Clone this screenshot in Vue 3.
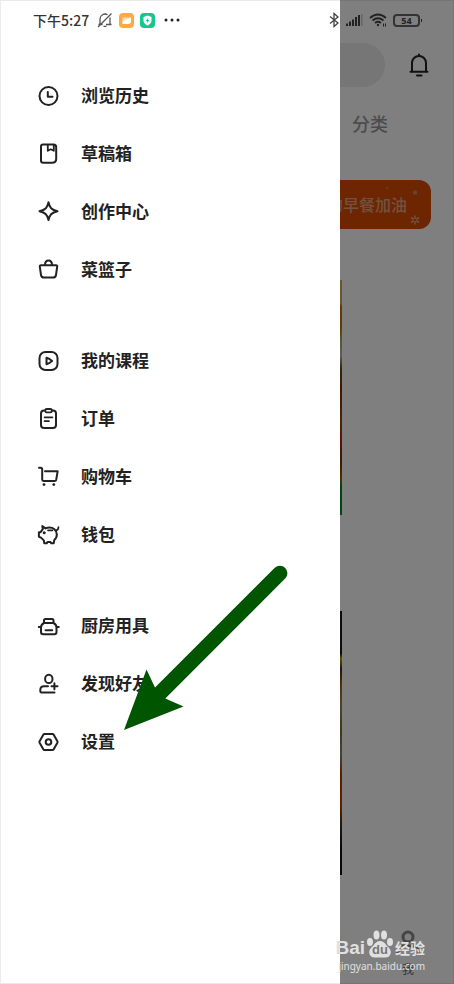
<script setup>
const groups = [
  [
    { id: 'history', label: '浏览历史' },
    { id: 'drafts', label: '草稿箱' },
    { id: 'create', label: '创作中心' },
    { id: 'basket', label: '菜篮子' },
  ],
  [
    { id: 'course', label: '我的课程' },
    { id: 'order', label: '订单' },
    { id: 'cart', label: '购物车' },
    { id: 'wallet', label: '钱包' },
  ],
  [
    { id: 'kitchen', label: '厨房用具' },
    { id: 'friends', label: '发现好友' },
    { id: 'settings', label: '设置' },
  ],
]

const icons = {
  history: '<circle cx="12.5" cy="12" r="9"/><path d="M11.8 8v4.700h4.700"/>',
  drafts:
    '<path d="M7.500 2.500h10q2.700 0 2.700 2.700v11.500q0 4-4 4H7.200q-2.200 0-2.200-2.200V4.500q0-2 2-2z"/><path d="M11.800 3v5.800l3-1.500 3 1.500V3" stroke-width="1.800"/>',
  create:
    '<path d="M12.500 2.300c1 5.200 3 7.500 9 8.900-6 1.400-8 3.700-9 8.900-1-5.200-3-7.500-9-8.900 6-1.400 8-3.700 9-8.900z"/>',
  basket:
    '<path d="M5 7.300h15q1.400 0 1.200 1.400l-1.200 8.300q-.4 2.500-2.900 2.500H7.900q-2.500 0-2.900-2.500L3.800 8.700q-.2-1.400 1.200-1.400z"/><path d="M9 7c0-6 7-6 7 0"/>',
  course: '<rect x="3.500" y="3" width="18" height="18" rx="6"/><path d="M10.500 8.800v6.400q2.800-.8 5.600-3.200-2.800-2.400-5.600-3.200z"/>',
  order:
    '<rect x="5" y="3.500" width="15" height="17.500" rx="3"/><rect x="9.300" y="2" width="6.500" height="3.400" rx="1.500" fill="#fff" stroke-width="1.800"/><path d="M8.600 10.300h7.800M8.600 14.200h4.300" stroke-width="1.800"/>',
  cart:
    '<path d="M3 2.700h1.700q1.500 0 1.500 1.500v10.400q0 1.400 1.400 1.400h11q1.300 0 1.600-1.300l1.500-8.500H9"/><g fill="#222" stroke="none"><circle cx="8" cy="19.600" r="1.400"/><circle cx="17.800" cy="19.600" r="1.400"/></g>',
  wallet:
    '<path d="M6.300 3.100l.5 3.100L4.600 9.200H2.900v4.600l2.100.8 2.800 2.800.5 2.800h2.500l.7-1.300h3l.7 1.300h2.500l.6-3.200c1.800-1.600 2.700-3.200 2.500-5.600 0-1.900-.9-3.800-2.400-5.100-1.500-1.300-3.300-1.700-5-1.700-1.500 0-2.800.4-3.900.8z" stroke-width="2"/><path d="M20 7.300q2.500-.3 2.500-3.300M12 7.300h4.500" stroke-width="1.700"/><circle cx="8.200" cy="9.700" r="1.500" fill="#222" stroke="none"/>',
  kitchen:
    '<path d="M8 8.500V6.500q0-1.500 1.500-1.500h6.500q1.500 0 1.500 1.500v2M2.800 13h2M20.800 13h2M8 9h9.500q3 1.500 3 4.500v4.500q0 2.300-2.300 2.300H7.300Q5 20.300 5 18v-4.500Q5 10.500 8 9zM9.600 16.200h6.600"/>',
  friends:
    '<ellipse cx="12.800" cy="6.900" rx="3.700" ry="4.200"/><path d="M12 14.300H8q-3.700 0-3.700 3.700v1.200q0 1.200 1.200 1.200h13M18.400 11.300v6M15.500 14.300h6"/>',
  settings:
    '<path d="M8.500 4h8q.8 0 1.200.7l3.700 6.500q.4.800 0 1.600l-3.700 6.500q-.4.700-1.200.7h-8q-.8 0-1.200-.7l-3.700-6.500q-.4-.8 0-1.600l3.700-6.500q.4-.7 1.200-.7z"/><circle cx="12.500" cy="12" r="2.800"/>',
}
</script>

<template>
  <div class="screen">
    <div class="page">
      <header class="top">
        <input class="search" type="text" aria-label="搜索" />
        <button class="bell" aria-label="通知">
          <svg viewBox="0 0 24 24" width="24" height="24" fill="none" stroke="#222" stroke-width="2" stroke-linecap="round">
            <path d="M12 1.500v1.500M5 18.500V10a7 7 0 0 1 14 0v8.500M3.500 18.800h17M10 22.500h4.500" />
          </svg>
        </button>
      </header>
      <nav class="tabs"><a href="#">分类</a></nav>
      <a class="banner" href="#">
        <span>为你的早餐加油</span>
        <svg class="flakes" viewBox="0 0 40 48" width="40" height="48">
          <g fill="#d4835c"><circle cx="3" cy="8" r="1" /><circle cx="31" cy="12.500" r="2.300" /></g>
          <path d="M31 35.500v9M27 37.500l8 5M35 37.500l-8 5" stroke="#e0a080" stroke-width="1.600" />
          <circle cx="31" cy="40" r="1.300" fill="#dd4c00" />
        </svg>
      </a>
      <div class="feed">
        <div class="photo first"></div>
        <div class="photo second"></div>
      </div>
      <footer class="tabbar">
        <a href="#">
          <svg viewBox="0 0 28 28" width="28" height="28" fill="none" stroke="#888" stroke-width="3">
            <circle cx="14" cy="8" r="5" /><path d="M4 25v-3q0-5 5-5h10q5 0 5 5v3" />
          </svg>
          <span>我</span>
        </a>
      </footer>
    </div>

    <aside class="drawer">
      <ul v-for="(group, i) in groups" :key="i" class="group">
        <li v-for="item in group" :key="item.id">
          <a href="#" class="row">
            <svg viewBox="0 0 24 24" class="icon" v-html="icons[item.id]"></svg>
            <span class="label">{{ item.label }}</span>
          </a>
        </li>
      </ul>
    </aside>

    <div class="status">
      <span class="time">下午5:27</span>
      <svg viewBox="0 0 16 16" width="16" height="16" fill="none" stroke="#555" stroke-width="1.300">
        <path d="M3 12.500V7a5 5 0 0 1 7.500-4.300M13 5.500v7M1.500 12.500h4M9 12.500h5.500M6.500 14.300h3M1 15L14.500 1.500" />
      </svg>
      <svg viewBox="0 0 15 15" width="15" height="15">
        <rect width="15" height="15" rx="4" fill="#ffa944" />
        <path d="M3.500 4.500h8.500v5L9.500 11h-6z" fill="#ffe3bf" /><path d="M3.500 11V8.500l8.500-4v5L9.500 11z" fill="#fff" />
      </svg>
      <svg viewBox="0 0 15 15" width="15" height="15">
        <rect width="15" height="15" rx="4" fill="#15c78b" />
        <path d="M7.500 2.500l4 1.500v3.500q0 3-4 5-4-2-4-5V4z" fill="#fff" /><path d="M8.300 4.500L5.800 8h1.500l-.5 2.500L9.300 7H7.800z" fill="#15c78b" />
      </svg>
      <svg class="more" viewBox="0 0 16 4" width="16" height="4" fill="#222">
        <circle cx="2" cy="2" r="1.500" /><circle cx="8" cy="2" r="1.500" /><circle cx="14" cy="2" r="1.500" />
      </svg>
      <svg class="bt" viewBox="0 0 10 16" width="10" height="16" fill="none" stroke="#444" stroke-width="1.300">
        <path d="M1 4.500l8 6.500-4 3.500v-13L9 5l-8 6.500" />
      </svg>
      <svg viewBox="0 0 18 14" width="18" height="14" fill="#222">
        <path d="M1 10.500h2V13H1zM4 8.500h2V13H4zM7 6.500h2V13H7zM10 4h2v9h-2zM13 2h2v11h-2z" /><path d="M16 1h1.500v12H16z" fill="#666" />
      </svg>
      <svg viewBox="0 0 18 14" width="18" height="14" fill="none" stroke="#222" stroke-width="1.700">
        <path d="M1 5Q9-2 17 5M3.500 7.500Q9 3 14.500 7.500M6 10Q9 7.500 12 10" /><circle cx="9" cy="12" r="1.200" fill="#222" stroke="none" />
        <path d="M14.500 10.500v3M16.500 10.500v3" stroke-width="1" />
      </svg>
      <span class="battery">54</span>
    </div>

    <svg class="arrow" viewBox="0 0 166 168" width="166" height="168" aria-hidden="true">
      <path d="M1 167L23.500 106.500 32 124.500 151.800 4.700A7.500 7.500 0 0 1 162.400 15.300L42.300 135.500 60.500 143.500z" fill="#005500" />
    </svg>

    <div class="watermark">
      <div class="brand">
        <span class="bai">Bai</span>
        <span class="paw">
          <svg viewBox="0 0 28 28" width="28" height="28" fill="#e0e0e0">
            <ellipse cx="4" cy="12" rx="3" ry="4" /><ellipse cx="10.500" cy="5" rx="3" ry="4.500" />
            <ellipse cx="18" cy="5" rx="3" ry="4.500" /><ellipse cx="24" cy="12" rx="3" ry="4" />
            <path d="M14 11q4 0 6.500 4.500Q26 20 24.500 24q-1.500 4-6 3.500h-9Q5 28 3.500 24 2 20 7.500 15.500 10 11 14 11z" />
          </svg>
          <b>du</b>
        </span>
        <span class="exp">经验</span>
      </div>
      <div class="url">jingyan.baidu.com</div>
    </div>
  </div>
</template>

<style>
body {
  background: #fff;
}
</style>

<style scoped>
* {
  box-sizing: border-box;
}
.screen {
  position: relative;
  min-height: 100vh;
  display: flex;
  overflow: hidden;
  font-family: 'Noto Sans CJK SC', sans-serif;
  color: #222;
}
.screen::after {
  content: '';
  position: absolute;
  inset: 0;
  box-shadow: inset 0 0 0 1px rgba(0, 0, 0, 0.08);
  pointer-events: none;
}
a {
  color: inherit;
  text-decoration: none;
}
svg {
  display: block;
  flex: none;
}
.page {
  position: relative;
  flex: 1;
  display: flex;
  flex-direction: column;
  padding-top: 43px;
}
.page::after {
  content: '';
  position: absolute;
  inset: 0;
  background: rgba(0, 0, 0, 0.5);
}
.top {
  display: flex;
  align-items: center;
  gap: 22px;
  padding: 0 23px 0 16px;
}
.search {
  flex: 1;
  min-width: 0;
  height: 44px;
  border: 0;
  border-radius: 22px;
  background: #ececec;
}
.bell {
  padding: 0;
  border: 0;
  background: none;
}
.tabs {
  display: flex;
  justify-content: flex-end;
  padding: 23px 66px 0 0;
  font-size: 18px;
  line-height: 26px;
  font-weight: 500;
  color: #999;
}
.banner {
  position: relative;
  display: flex;
  align-items: center;
  justify-content: flex-end;
  height: 49px;
  margin: 44px 23px 0 16px;
  padding: 0 24px 2px 0;
  border-radius: 12px;
  background: #dd4c00;
  color: #e0a484;
  font-size: 16px;
  font-weight: 500;
}
.flakes {
  position: absolute;
  right: 7px;
  top: 0;
}
.feed {
  flex: 1;
  display: flex;
  flex-direction: column;
  gap: 96px;
  padding: 51px 112px 0 16px;
}
.photo.first {
  height: 235px;
  background: linear-gradient(#c8b060 0 10%, #c07800 11% 20%, #b0a050 24%, #bbb 32%, #605010 38%, #803000 46%, #905010 60%, #c02010 70%, #703000 76%, #a06000 85%, #008830 87%);
}
.photo.second {
  height: 264px;
  background: linear-gradient(#181818 0 16%, #c0a000 18%, #403020 22%, #b06000 28%, #998866 36%, #807030 45%, #808880 54%, #b04000 62%, #c04000 74%, #303030 82%, #111 90%);
}
.tabbar {
  display: flex;
  justify-content: flex-end;
  padding: 0 32px 5px 0;
}
.tabbar a {
  display: flex;
  flex-direction: column;
  align-items: center;
  gap: 2px;
  color: #666;
  font-size: 12px;
  line-height: 20px;
}
.drawer {
  position: absolute;
  inset: 0 auto 0 0;
  width: calc(75% - 1px);
  padding-top: 67px;
  background: #fff;
}
.group {
  margin: 0 0 33px;
  padding: 0;
  list-style: none;
}
.row {
  display: flex;
  align-items: center;
  gap: 21px;
  height: 58px;
  padding-left: 36px;
  font-size: 17px;
  font-weight: 700;
}
.label {
  padding-bottom: 3px;
}
.icon {
  width: 24px;
  height: 24px;
  fill: none;
  stroke: #222;
  stroke-width: 2;
  stroke-linecap: round;
  stroke-linejoin: round;
}
.status {
  position: absolute;
  inset: 0 0 auto 0;
  display: flex;
  align-items: center;
  gap: 6px;
  height: 40px;
  padding: 0 34px 0 33px;
}
.time {
  margin-right: 2px;
  font-size: 14px;
  font-weight: 500;
  color: #333;
}
.more {
  margin-left: 3px;
}
.bt {
  margin-left: auto;
}
.battery {
  position: relative;
  width: 27px;
  height: 13px;
  border: 2px solid #333;
  border-radius: 4px;
  font: 700 9px/9px 'Noto Sans', sans-serif;
  text-align: center;
}
.battery::after {
  content: '';
  position: absolute;
  right: -4px;
  top: 3px;
  width: 1px;
  height: 3px;
  background: #222;
}
.arrow {
  position: absolute;
  left: 123px;
  top: 563px;
}
.watermark {
  position: absolute;
  right: 29px;
  bottom: 10px;
  color: #e0e0e0;
}
.brand {
  display: flex;
  align-items: flex-end;
  justify-content: flex-end;
  gap: 1px;
  height: 28px;
}
.bai {
  font: 700 19px/20px 'Liberation Sans', sans-serif;
}
.paw {
  position: relative;
}
.paw b {
  position: absolute;
  inset: 13px 0 auto 0;
  color: #777;
  font: 700 13px/13px 'Liberation Sans', sans-serif;
  text-align: center;
}
.exp {
  font-size: 15px;
  line-height: 20px;
  font-weight: 700;
}
.url {
  font: 10px/16px 'Noto Sans', sans-serif;
  text-align: right;
}
</style>
